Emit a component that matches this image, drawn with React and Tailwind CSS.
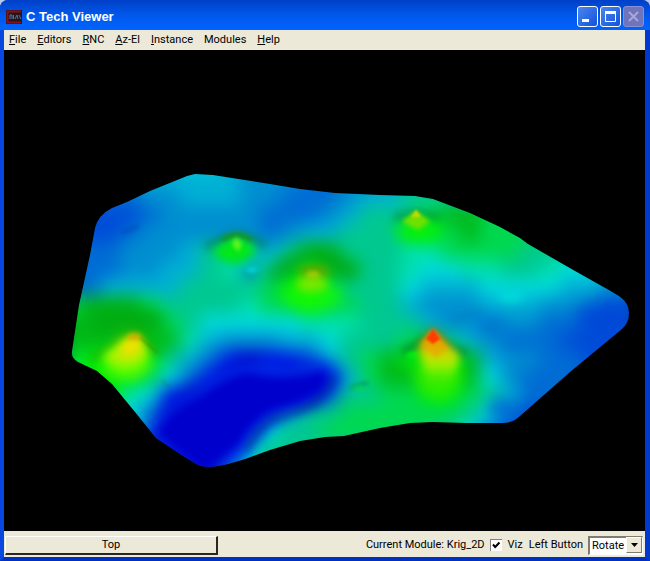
const menus = ['File', 'Editors', 'RNC', 'Az-El', 'Instance', 'Modules', 'Help'];

const palette = {
    0: '#0000cc',
    1: '#0018e8',
    2: '#004cd8',
    3: '#006cd4',
    4: '#008ed0',
    5: '#00b0d4',
    6: '#00dcdc',
    7: '#00e0ac',
    8: '#00c890',
    9: '#00d850',
    a: '#00b818',
    b: '#00ec08',
    d: '#80f000',
};

// One character per 20x18 cell of the surface, low (0) to high (d)
const surface = [
    '55555566554433445588899999999',
    '55555555544433445888899999999',
    '33334455544333455888899999999',
    '2222344444333458889aa99999999',
    '22234444443455888bb9a99999999',
    '333444588858aa888779999887777',
    '33344558758abaa88766778876666',
    '33555588889bb9888655566665544',
    '9aaa98888799b9988544455544322',
    'aaaaa986666677788854434433222',
    'aaadaa754445568889a8543332222',
    '9bbdb85310112589abbba54433222',
    'bbbb963100000159aabba64333333',
    'bbb761000000038899bb985333333',
    '77763000002588999999863233333',
    '66663000026889999998632333333',
    '66630000168888888888833333333',
    '00000000468888888888833333333',
];

const outline =
    'M195 174 L213 175 L270 184 L300 189 L335 193 L380 195 L415 196 L433 199 L470 213 L500 227 L520 238 L528 244 L575 271 L607 289 L619 296 Q629 303 629 313 Q629 323 622 329 L570 372 L520 416 Q513 423 503 423 L466 423 L433 422 L410 423 L380 428 L344 436 L325 437 L300 441 L270 450 L245 459 L228 464 Q208 469 198 465 L180 454 L156 438 L135 412 L112 384 L97 371 L78 362 Q71 358 72 351 L79 305 L90 255 L95 228 Q98 215 112 208 L127 202 L150 191 L187 176 Z';

const Terrain = () => {
    return (
        <svg viewBox="4 50 641 481" className="h-full w-full" role="img" aria-label="Kriged surface">
            <defs>
                <clipPath id="outline">
                    <path d={outline} />
                </clipPath>
                {[1, 2, 4, 7, 9].map((size) => (
                    <filter key={size} id={`soft${size}`} filterUnits="userSpaceOnUse" x="4" y="50" width="641" height="481" colorInterpolationFilters="sRGB">
                        <feGaussianBlur stdDeviation={size} />
                    </filter>
                ))}
                <linearGradient id="summit" x1="0" y1="0" x2="0" y2="1">
                    <stop offset="0" stopColor="#ff3800" />
                    <stop offset="0.2" stopColor="#f08000" />
                    <stop offset="0.4" stopColor="#d8d000" />
                    <stop offset="0.65" stopColor="#a0f000" />
                    <stop offset="1" stopColor="#40ec00" stopOpacity="0" />
                </linearGradient>
            </defs>
            <g clipPath="url(#outline)">
                <g filter="url(#soft9)">
                    {surface.map((row, y) =>
                        [...row].map((level, x) => (
                            <rect key={`${x}-${y}`} x={60 + x * 20} y={152 + y * 18} width="21" height="19" fill={palette[level]} />
                        ))
                    )}
                </g>

                {/* lake */}
                <path d="M146 436 Q162 406 194 392 Q218 372 242 364 Q264 358 290 366 Q316 358 330 364 Q342 376 326 398 Q310 410 284 416 Q262 428 246 455 L205 478 Z" fill="#0030e8" opacity="0.85" filter="url(#soft7)" />
                <path d="M246 452 Q254 430 274 418 Q318 410 335 376" fill="none" stroke="#003080" strokeWidth="6" opacity="0.6" filter="url(#soft4)" />
                <path d="M156 434 Q168 408 200 396 Q226 376 248 372 Q285 382 322 370 Q334 378 320 392 Q302 404 272 411 Q252 422 240 444 L205 474 Z" fill="#0000cc" filter="url(#soft4)" />

                {/* west peak */}
                <ellipse cx="126" cy="320" rx="38" ry="14" fill="#00a810" opacity="0.7" filter="url(#soft7)" />
                <path d="M92 360 Q116 344 134 334 L158 354" fill="none" stroke="#308c00" strokeWidth="6" opacity="0.6" filter="url(#soft4)" />
                <ellipse cx="126" cy="362" rx="24" ry="16" fill="#60fc00" filter="url(#soft7)" />
                <path d="M104 358 Q120 342 135 335 L148 352 Q140 368 120 366 Z" fill="#b0f000" filter="url(#soft4)" />
                <path d="M122 344 L136 334 L143 346 L132 356 L120 354 Z" fill="#f0e000" filter="url(#soft4)" />
                <ellipse cx="134" cy="337" rx="7" ry="3" fill="#e0a000" opacity="0.8" filter="url(#soft2)" />
                <path d="M140 338 L158 353 M162 380 L170 388" fill="none" stroke="#387000" strokeWidth="1" opacity="0.6" filter="url(#soft1)" />

                {/* north west peak */}
                <path d="M206 247 Q224 238 236 235 Q250 236 266 246" fill="none" stroke="#006838" strokeWidth="6" opacity="0.6" filter="url(#soft4)" />
                <path d="M212 252 Q228 236 237 236 Q246 236 256 250 Q248 262 234 264 Q222 262 212 252 Z" fill="#00e818" filter="url(#soft4)" />
                <path d="M222 240 Q236 230 252 240" fill="none" stroke="#208800" strokeWidth="3" filter="url(#soft2)" />
                <path d="M232 244 L236 237 L242 244 L238 252 Z" fill="#80f820" opacity="0.8" filter="url(#soft2)" />
                <ellipse cx="250" cy="275" rx="9" ry="3" fill="#008890" opacity="0.7" filter="url(#soft4)" />
                <ellipse cx="252" cy="270" rx="5" ry="2" fill="#00dce8" filter="url(#soft2)" />

                {/* central peak */}
                <path d="M270 280 Q286 258 314 256 Q338 258 352 276" fill="none" stroke="#009c18" strokeWidth="12" opacity="0.6" filter="url(#soft7)" />
                <ellipse cx="312" cy="296" rx="30" ry="14" fill="#18fc00" opacity="0.8" filter="url(#soft7)" />
                <ellipse cx="314" cy="272" rx="16" ry="7" fill="#60a400" filter="url(#soft4)" />
                <ellipse cx="312" cy="284" rx="16" ry="8" fill="#78e800" filter="url(#soft4)" />
                <ellipse cx="313" cy="275" rx="7" ry="4" fill="#a8d008" opacity="0.8" filter="url(#soft2)" />

                {/* north east peak */}
                <path d="M394 218 L416 213 L440 218" fill="none" stroke="#006428" strokeWidth="5" opacity="0.7" filter="url(#soft4)" />
                <ellipse cx="418" cy="230" rx="22" ry="8" fill="#08f400" opacity="0.9" filter="url(#soft7)" />
                <path d="M402 222 L416 210 L430 222 L418 230 Z" fill="#70e000" filter="url(#soft2)" />
                <path d="M411 217 L416 210 L421 217 Z" fill="#c8d800" filter="url(#soft1)" />

                {/* summit */}
                <path d="M402 352 L432 338 L466 354" fill="none" stroke="#006c28" strokeWidth="7" opacity="0.75" filter="url(#soft4)" />
                <ellipse cx="438" cy="376" rx="22" ry="22" fill="#38ec00" opacity="0.9" filter="url(#soft7)" />
                <ellipse cx="413" cy="355" rx="7" ry="3" fill="#00f010" filter="url(#soft2)" />
                <path d="M433 328 L446 342 L460 356 L452 380 L430 386 L422 360 L418 348 Z" fill="url(#summit)" filter="url(#soft4)" />
                <path d="M433 329 L448 348 L436 358 L420 344 Z" fill="#e8a800" opacity="0.7" filter="url(#soft2)" />
                <path d="M433 329 L440 339 L433 344 L426 339 Z" fill="#ff3c00" filter="url(#soft1)" />

                {/* ridges */}
                <path d="M350 388 L358 385 L368 383" fill="none" stroke="#006040" strokeWidth="2" opacity="0.7" filter="url(#soft2)" />
                <ellipse cx="358" cy="388" rx="7" ry="2" fill="#00d850" filter="url(#soft2)" />
                <path d="M122 233 L138 226" stroke="#0040b0" strokeWidth="4" opacity="0.5" filter="url(#soft2)" />
                <path d="M450 320 L482 314 M484 328 L504 326" stroke="#0078c0" strokeWidth="5" opacity="0.5" filter="url(#soft4)" />
                <ellipse cx="511" cy="297" rx="12" ry="5" fill="#00e4dc" opacity="0.8" filter="url(#soft4)" />
                <ellipse cx="598" cy="317" rx="22" ry="10" fill="#0044d8" opacity="0.6" filter="url(#soft7)" />
                <ellipse cx="500" cy="408" rx="14" ry="10" fill="#0054d8" opacity="0.6" filter="url(#soft7)" />
            </g>
        </svg>
    );
};

const WindowButton = ({ label, disabled, children }) => {
    return (
        <button
            type="button"
            aria-label={label}
            disabled={disabled}
            className="flex h-[21px] w-[21px] items-center justify-center rounded-[3px] border border-white bg-linear-to-br from-[#4a86f0] to-[#1450d8] disabled:border-[#8a8fd0] disabled:bg-none disabled:bg-[#6f74bc]"
        >
            <svg viewBox="0 0 19 19" className="h-[19px] w-[19px]" fill="none" stroke="white">
                {children}
            </svg>
        </button>
    );
};

const TitleBar = () => {
    return (
        <header className="flex h-[30px] items-center bg-linear-to-b from-[#0040c8] via-[#0058ec] to-[#0064fc] pt-[3px] pr-[6px] pl-[6px]">
            <svg viewBox="0 0 16 14" className="h-[14px] w-4" aria-hidden="true">
                <rect width="16" height="14" fill="#28141c" />
                <path d="M15 1.5H1.5v11H15" fill="none" stroke="#8c1018" strokeWidth="2" />
                <path d="M4 9V5h2v4M7.5 5v4M9 9l2-4 1 4M13 5l2 4" fill="none" stroke="#4878a0" />
            </svg>
            <h1 className="ml-1 flex-1 font-['Liberation_Sans'] text-[13px] font-bold text-white">C Tech Viewer</h1>
            <div className="flex gap-[2px]">
                <WindowButton label="Minimize">
                    <path d="M4 13.5h7" strokeWidth="3" />
                </WindowButton>
                <WindowButton label="Maximize">
                    <path d="M4.5 5v9.5h10V5" />
                    <path d="M4 5.5h11" strokeWidth="3" />
                </WindowButton>
                <WindowButton label="Close" disabled>
                    <path d="M5 5l9 9M14 5l-9 9" stroke="#a5a8d8" strokeWidth="2" />
                </WindowButton>
            </div>
        </header>
    );
};

const MenuBar = () => {
    return (
        <nav className="flex h-5 items-center gap-[11px] bg-[#ece9d8] px-[5px]">
            {menus.map((name) => (
                <button key={name} type="button">
                    {name === 'Modules' ? name : <><u>{name[0]}</u>{name.slice(1)}</>}
                </button>
            ))}
        </nav>
    );
};

const StatusBar = () => {
    return (
        <footer className="flex h-[26px] items-center bg-[#ece9d8] pt-[2px] pr-[2px]">
            <button type="button" className="ml-px h-[19px] w-1/3 border-t border-r-2 border-b-2 border-l border-t-white border-r-[#282820] border-b-[#282820] border-l-white">
                Top
            </button>
            <div className="flex flex-1 items-center justify-end">
                <span>Current Module: Krig_2D</span>
                <label className="ml-[5px] flex items-center gap-[6px]">
                    <span className="grid">
                        <input type="checkbox" defaultChecked className="peer col-start-1 row-start-1 h-3 w-3 appearance-none border-t border-l border-[#808080] bg-white" />
                        <svg viewBox="0 0 12 12" className="pointer-events-none invisible col-start-1 row-start-1 h-3 w-3 peer-checked:visible">
                            <path d="M3 5.5l2.2 2.5L9.5 3.5" fill="none" stroke="black" strokeWidth="2" />
                        </svg>
                    </span>
                    Viz
                </label>
                <label htmlFor="left-button" className="ml-[6px]">Left Button</label>
                <div className="ml-[5px] grid items-center justify-items-end">
                    <select id="left-button" className="col-start-1 row-start-1 h-[19px] w-[55px] appearance-none border-t-2 border-r border-b border-l-2 border-t-[#807c70] border-r-white border-b-white border-l-[#807c70] bg-white pl-[2px]">
                        <option>Rotate</option>
                        <option>Scale</option>
                        <option>Translate</option>
                    </select>
                    <span className="pointer-events-none col-start-1 row-start-1 mr-px flex h-4 w-4 items-center justify-center border-t border-r border-b border-l border-t-white border-r-[#807c70] border-b-[#807c70] border-l-white bg-[#ece9d8]">
                        <svg viewBox="0 0 7 4" className="h-1 w-[7px]">
                            <path d="M0 0h7L3.5 4z" />
                        </svg>
                    </span>
                </div>
            </div>
        </footer>
    );
};

const App = () => {
    return (
        <div className="h-screen bg-[#b8c8e8]">
            <div className="flex h-full flex-col overflow-hidden rounded-t-lg bg-[#0040d0] font-['Roboto','Liberation_Sans',sans-serif] text-[11px] leading-[14px] text-black">
                <TitleBar />
                <div className="flex min-h-0 flex-1 flex-col border-r-[5px] border-b-4 border-l-4 border-r-[#0038d0] border-b-[#0030c0] border-l-[#0848e0]">
                    <MenuBar />
                    <main className="min-h-0 flex-1 bg-black">
                        <Terrain />
                    </main>
                    <StatusBar />
                </div>
            </div>
        </div>
    );
};

export default App;
